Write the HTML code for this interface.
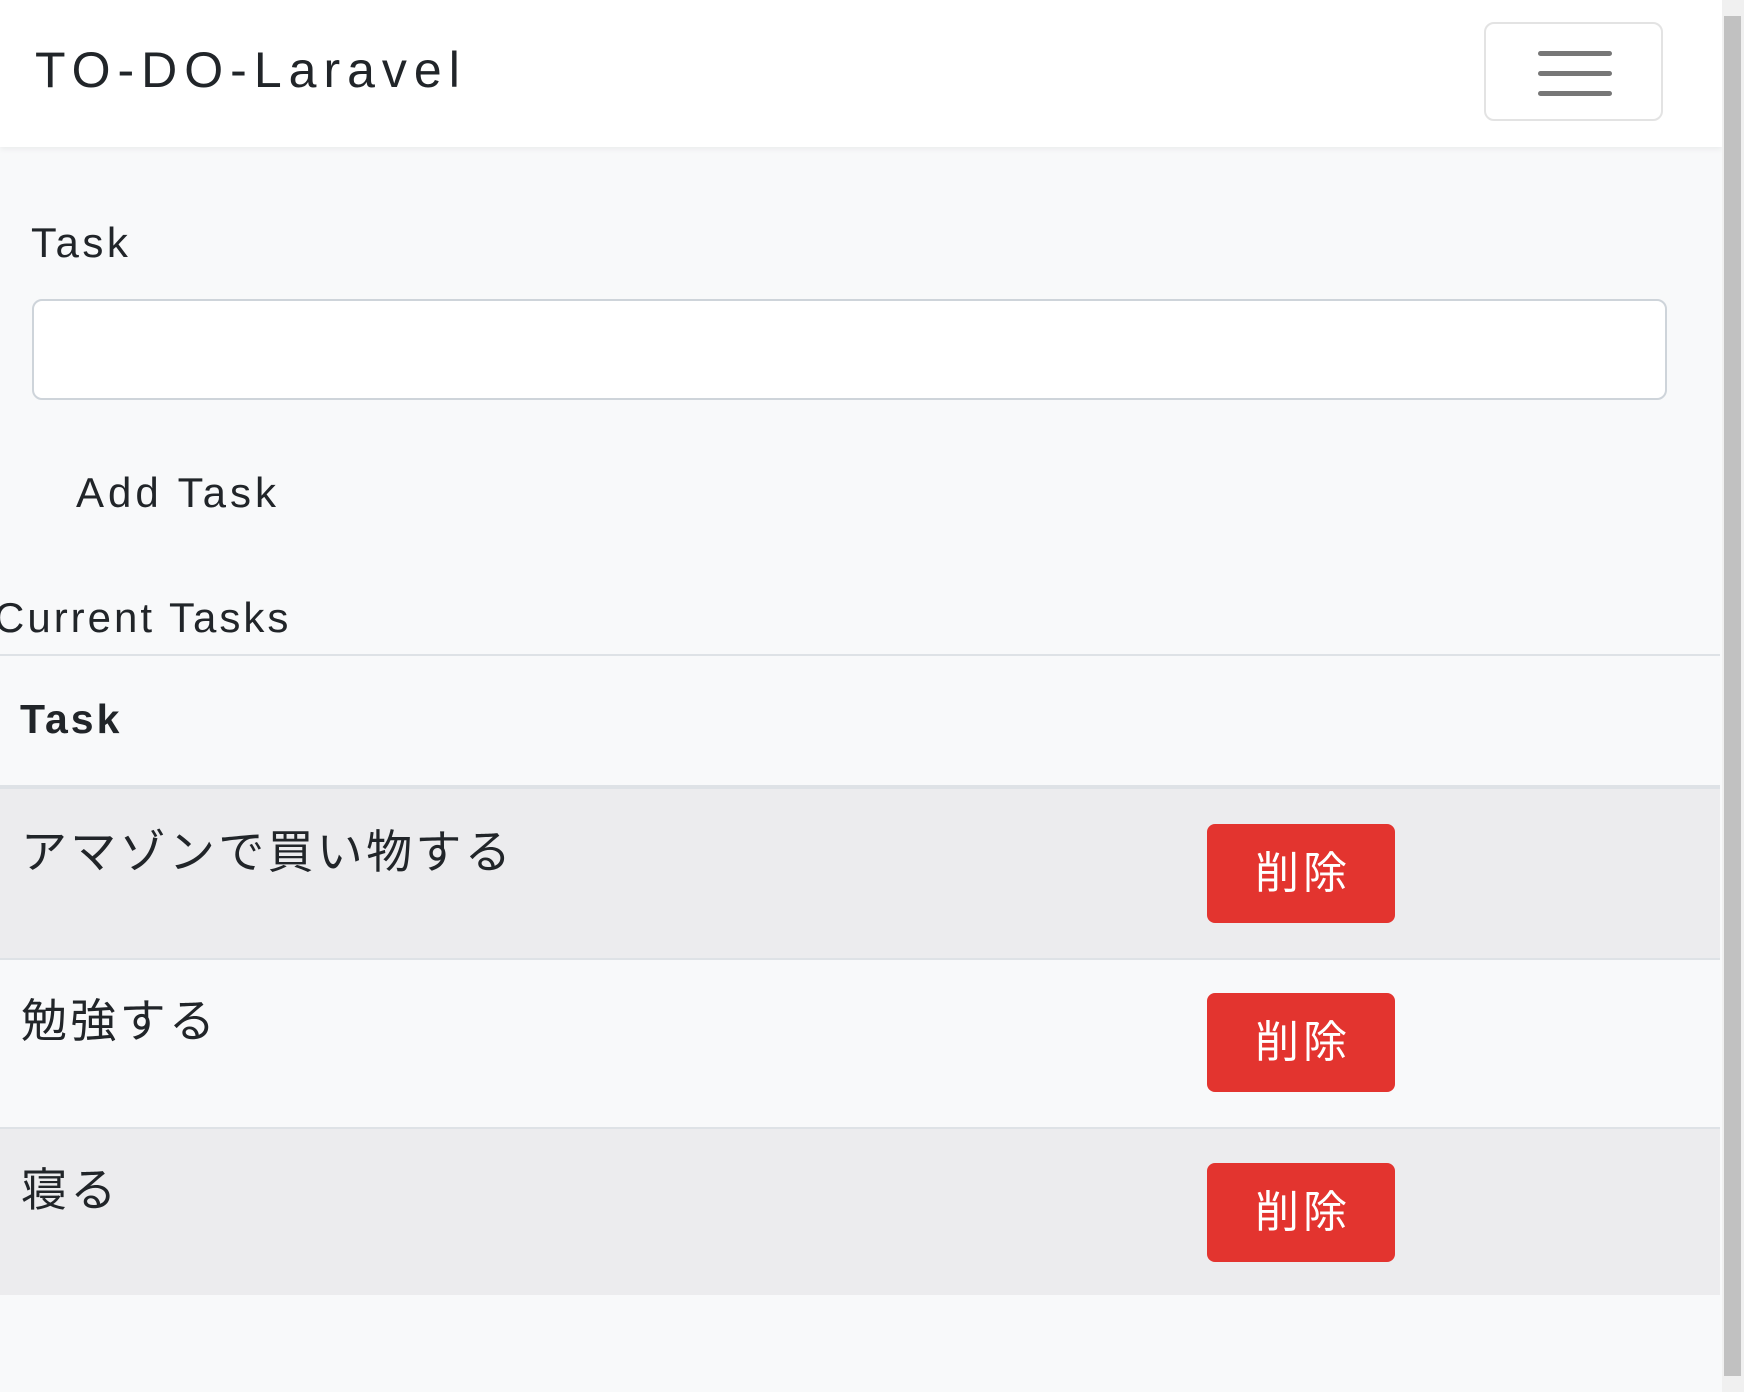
<!DOCTYPE html>
<html><head><meta charset="utf-8"><style>
*{box-sizing:border-box;margin:0;padding:0}
body{width:1744px;height:1392px;overflow:hidden;background:#f8f9fa;font-family:"Liberation Sans","Noto Sans CJK JP",sans-serif;color:#212529;position:relative}
.nav{position:absolute;left:0;top:0;width:1722px;height:147px;background:#fff;box-shadow:0 2px 6px rgba(0,0,0,.06)}
.brand{position:absolute;left:35px;top:40px;font-size:50px;line-height:60px;letter-spacing:7px}
.tog{position:absolute;left:1484px;top:22px;width:179px;height:99px;border:2px solid #e3e3e3;border-radius:10px}
.tog i{position:absolute;left:52px;width:74px;height:5px;border-radius:3px;background:#777}
.abs{position:absolute;white-space:nowrap}
.input{position:absolute;left:32px;top:299px;width:1635px;height:101px;background:#fff;border:2px solid #ced4da;border-radius:10px}
.row{position:absolute;left:0;width:1720px}
.btn{position:absolute;left:1207px;width:188px;height:99px;background:#e3342f;border-radius:8px;color:#fff;font-size:44px;line-height:99px;text-align:center;letter-spacing:4px;padding-left:4px}
.jp{letter-spacing:3.3px;font-size:46px!important}
.sb{position:absolute;left:1722px;top:0;width:22px;height:1392px;background:#f0f0f0}
.sb div{position:absolute;left:2px;top:16px;width:17px;height:1360px;background:#c1c1c1}
</style></head><body>
<div class="nav"><div class="brand">TO-DO-Laravel</div>
<div class="tog"><i style="top:27px"></i><i style="top:47px"></i><i style="top:67px"></i></div></div>
<div class="abs" style="left:31px;top:218px;font-size:42px;line-height:50px;letter-spacing:3.5px">Task</div>
<div class="input"></div>
<div class="abs" style="left:76px;top:468px;font-size:42px;line-height:50px;letter-spacing:4px">Add Task</div>
<div class="abs" style="left:-6px;top:593px;font-size:42px;line-height:50px;letter-spacing:3px">Current Tasks</div>
<div class="row" style="top:654px;height:2px;background:#dee2e6"></div>
<div class="abs" style="left:20px;top:694px;font-size:41px;font-weight:bold;line-height:50px;letter-spacing:3px">Task</div>
<div class="row" style="top:785px;height:4px;background:#dee2e6"></div>
<div class="row" style="top:789px;height:169px;background:#ececee"></div>
<div class="row" style="top:958px;height:2px;background:#dee2e6"></div>
<div class="row" style="top:960px;height:168px;background:#f8f9fa"></div>
<div class="row" style="top:1127px;height:2px;background:#dee2e6"></div>
<div class="row" style="top:1129px;height:166px;background:#ececee"></div>
<div class="abs jp" style="left:21px;top:824px;line-height:56px">アマゾンで買い物する</div>
<div class="abs jp" style="left:21px;top:993px;line-height:56px">勉強する</div>
<div class="abs jp" style="left:21px;top:1162px;line-height:56px">寝る</div>
<div class="btn" style="top:824px">削除</div>
<div class="btn" style="top:993px">削除</div>
<div class="btn" style="top:1163px">削除</div>
<div class="sb"><div></div></div>
</body></html>
